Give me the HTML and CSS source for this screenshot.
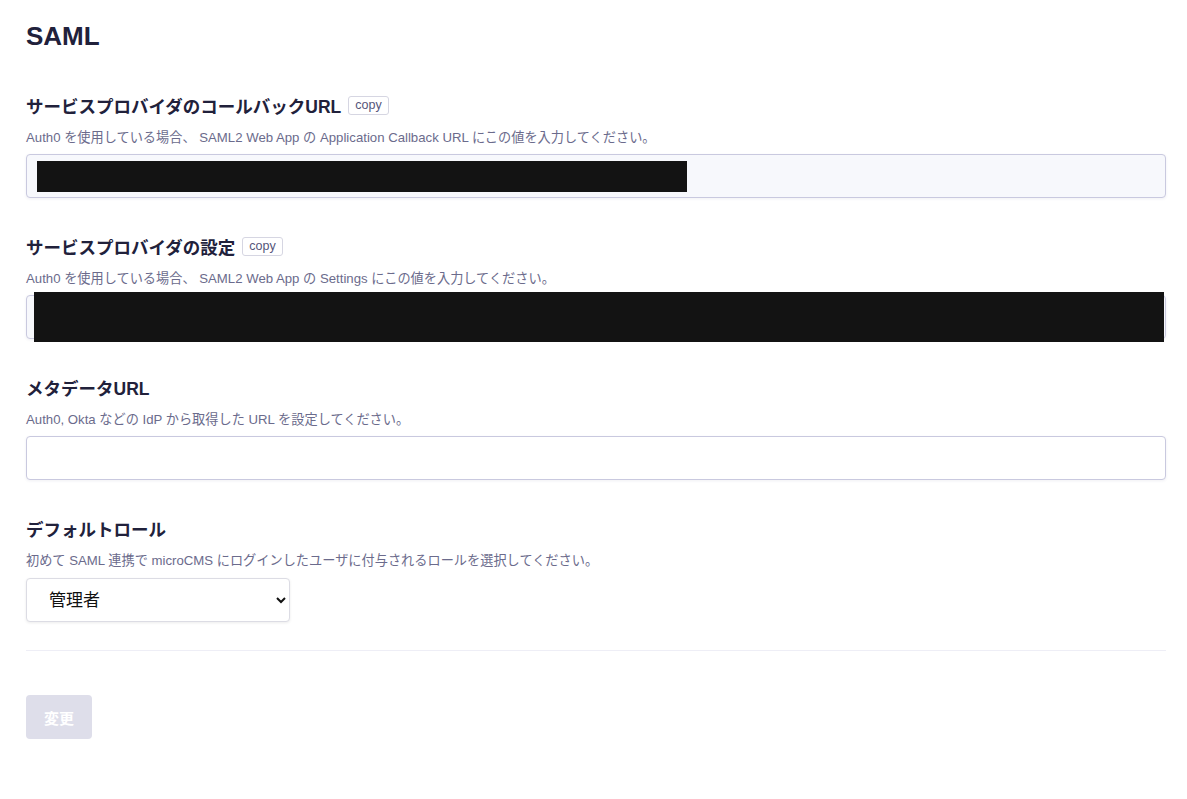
FILE: index.html
```html
<!DOCTYPE html>
<html lang="ja">
<head>
    <meta charset="UTF-8">
    <title>SAML</title>
    <link rel="stylesheet" href="styles.css">
</head>
<body>
    <div class="page">
        <h1 class="page-title">SAML</h1>

        <div class="field">
            <div class="field-head">
                <label class="field-label">サービスプロバイダのコールバックURL</label>
                <button class="copy-btn">copy</button>
            </div>
            <p class="field-desc">Auth0 を使用している場合、 SAML2 Web App の Application Callback URL にこの値を入力してください。</p>
            <div class="input-wrap">
                <input class="text-input readonly" type="text" readonly>
                <div class="redact redact-callback"></div>
            </div>
        </div>

        <div class="field">
            <div class="field-head">
                <label class="field-label">サービスプロバイダの設定</label>
                <button class="copy-btn">copy</button>
            </div>
            <p class="field-desc">Auth0 を使用している場合、 SAML2 Web App の Settings にこの値を入力してください。</p>
            <div class="input-wrap">
                <input class="text-input readonly" type="text" readonly>
                <div class="redact redact-settings"></div>
            </div>
        </div>

        <div class="field">
            <div class="field-head">
                <label class="field-label">メタデータURL</label>
            </div>
            <p class="field-desc">Auth0, Okta などの IdP から取得した URL を設定してください。</p>
            <input class="text-input" type="text">
        </div>

        <div class="field">
            <div class="field-head">
                <label class="field-label">デフォルトロール</label>
            </div>
            <p class="field-desc">初めて SAML 連携で microCMS にログインしたユーザに付与されるロールを選択してください。</p>
            <select class="role-select">
                <option>管理者</option>
            </select>
        </div>

        <hr class="divider">

        <button class="submit-btn" disabled>変更</button>
    </div>
</body>
</html>
```

FILE: styles.css
```css
* {
    margin: 0;
    padding: 0;
    box-sizing: border-box;
}
body {
    font-family: "Liberation Sans", "Noto Sans CJK JP", sans-serif;
    color: #21213b;
    background-color: #fff;
}
.page {
    padding: 20px 21px 40px 26px;
}
.page-title {
    font-size: 26px;
    font-weight: bold;
    line-height: 32px;
    margin-bottom: 40px;
}
.field {
    margin-bottom: 35px;
}
.field-head {
    display: flex;
    align-items: center;
    gap: 7px;
    height: 26px;
}
.field-label {
    font-size: 17.5px;
    font-weight: bold;
}
.copy-btn {
    font-family: inherit;
    font-size: 12.5px;
    color: #55557a;
    background-color: #fff;
    border: 1px solid #d6d6e2;
    border-radius: 3px;
    padding: 1px 6px;
    line-height: 15px;
}
.field-desc {
    font-size: 13.2px;
    color: #6b6b8c;
    margin-top: 12px;
    line-height: 16px;
}
.input-wrap {
    position: relative;
}
.text-input {
    display: block;
    width: 100%;
    height: 44px;
    margin-top: 8px;
    border: 1px solid #c9c9df;
    border-radius: 4px;
    background-color: #fff;
    box-shadow: 0 1px 3px rgba(60, 60, 120, 0.08);
    font-size: 16px;
    padding: 0 12px;
}
.text-input.readonly {
    background-color: #f7f8fc;
}
.redact {
    position: absolute;
    background-color: #131313;
}
.redact-callback {
    left: 11px;
    top: 7px;
    width: 650px;
    height: 31px;
}
.redact-settings {
    left: 8px;
    top: -3px;
    width: 1130px;
    height: 50px;
}
.role-select {
    display: block;
    width: 264px;
    height: 44px;
    margin-top: 9px;
    font-family: inherit;
    font-size: 17px;
    color: #111;
    background-color: #fff;
    border: 1px solid #dcdce4;
    border-radius: 4px;
    box-shadow: 0 1px 3px rgba(0, 0, 0, 0.08);
    padding: 0 18px;
}
.divider {
    border: none;
    border-top: 1px solid #eeeef6;
    margin-top: -7px;
}
.submit-btn {
    margin-top: 44px;
    width: 66px;
    height: 44px;
    font-family: inherit;
    font-size: 15px;
    font-weight: bold;
    color: #fff;
    background-color: #dedeea;
    border: none;
    border-radius: 4px;
}
```
